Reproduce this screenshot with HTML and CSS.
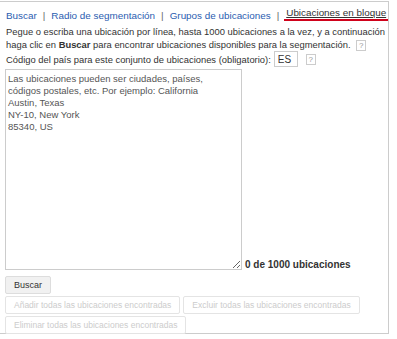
FILE: index.html
```html
<!DOCTYPE html>
<html lang="es">
<head>
    <meta charset="UTF-8">
    <title>Ubicaciones en bloque</title>
    <link rel="stylesheet" href="styles.css">
</head>
<body>
    <div class="panel">
        <div class="tabs">
            <a class="tab" href="#">Buscar</a>
            <span class="sep">|</span>
            <a class="tab" href="#">Radio de segmentación</a>
            <span class="sep">|</span>
            <a class="tab" href="#">Grupos de ubicaciones</a>
            <span class="sep">|</span>
            <a class="tab active" href="#">Ubicaciones en bloque</a>
        </div>
        <p class="intro">
            Pegue o escriba una ubicación por línea, hasta 1000 ubicaciones a la vez, y a continuación<br>
            haga clic en <b>Buscar</b> para encontrar ubicaciones disponibles para la segmentación.
            <span class="help">?</span>
        </p>
        <div class="country">
            Código del país para este conjunto de ubicaciones (obligatorio):
            <input class="code" type="text" value="ES">
            <span class="help">?</span>
        </div>
        <div class="entry">
            <textarea class="locations" placeholder="Las ubicaciones pueden ser ciudades, países,
códigos postales, etc. Por ejemplo: California
Austin, Texas
NY-10, New York
85340, US"></textarea>
            <span class="count">0 de 1000 ubicaciones</span>
        </div>
        <div class="actions first">
            <button class="btn">Buscar</button>
        </div>
        <div class="actions">
            <button class="btn" disabled>Añadir todas las ubicaciones encontradas</button>
            <button class="btn" disabled>Excluir todas las ubicaciones encontradas</button>
        </div>
        <div class="actions">
            <button class="btn" disabled>Eliminar todas las ubicaciones encontradas</button>
        </div>
    </div>
</body>
</html>
```

FILE: styles.css
```css
body {
    margin: 0;
    background: #fff;
    font-family: Arial, "Liberation Sans", sans-serif;
    font-size: 9.4px;
    color: #333;
}

.panel {
    width: 389px;
    height: 333px;
    margin-top: 1px;
    border: 1px solid #ccc;
    border-left: none;
    box-sizing: border-box;
    padding: 4px 0 0 5px;
    white-space: nowrap;
}

.tabs {
    display: flex;
    align-items: flex-end;
    gap: 5px;
    font-size: 9.9px;
    height: 15px;
}

.tab {
    color: #2a5db0;
    text-decoration: none;
    padding: 0 1px;
}

.sep {
    color: #666;
}

.tab.active {
    flex: 1;
    color: #333;
    text-decoration: underline;
    border-bottom: 2px solid #d0021b;
    padding: 0 0 1px 2px;
}

.intro {
    margin: 4px 0 0 1px;
    line-height: 13px;
}

.help {
    display: inline-block;
    width: 8px;
    height: 9px;
    line-height: 9px;
    border: 1px solid #ccc;
    color: #999;
    font-size: 8px;
    text-align: center;
    margin-left: 3px;
    vertical-align: middle;
}

.country {
    display: flex;
    align-items: center;
    gap: 3px;
    margin: 0 0 0 1px;
}

.code {
    width: 16px;
    height: 12px;
    border: 1px solid #ccc;
    font: 10px Arial, "Liberation Sans", sans-serif;
    color: #333;
    padding: 1px 3px;
}

.country .help {
    margin-left: 5px;
}

.entry {
    display: flex;
    align-items: flex-end;
    gap: 3px;
    margin-top: 2px;
}

.locations {
    width: 237px;
    height: 201px;
    box-sizing: border-box;
    border: 1px solid #ccc;
    padding: 3px 2px;
    font: 9.5px/12px Arial, "Liberation Sans", sans-serif;
    resize: both;
}

.locations::placeholder {
    color: #555;
}

.count {
    font-weight: bold;
    font-size: 10px;
    color: #333;
}

.actions {
    display: flex;
    gap: 3px;
    margin-top: 2px;
}

.actions.first {
    margin-top: 6px;
}

.btn {
    height: 18px;
    padding: 0 8px;
    border: 1px solid #ddd;
    border-radius: 2px;
    background: #f1f1f1;
    font: 8.5px Arial, "Liberation Sans", sans-serif;
    color: #333;
}

.btn:disabled {
    background: #fff;
    color: #ccc;
    border-color: #e4e4e4;
}

.actions.first .btn {
    font-size: 9px;
}
```
